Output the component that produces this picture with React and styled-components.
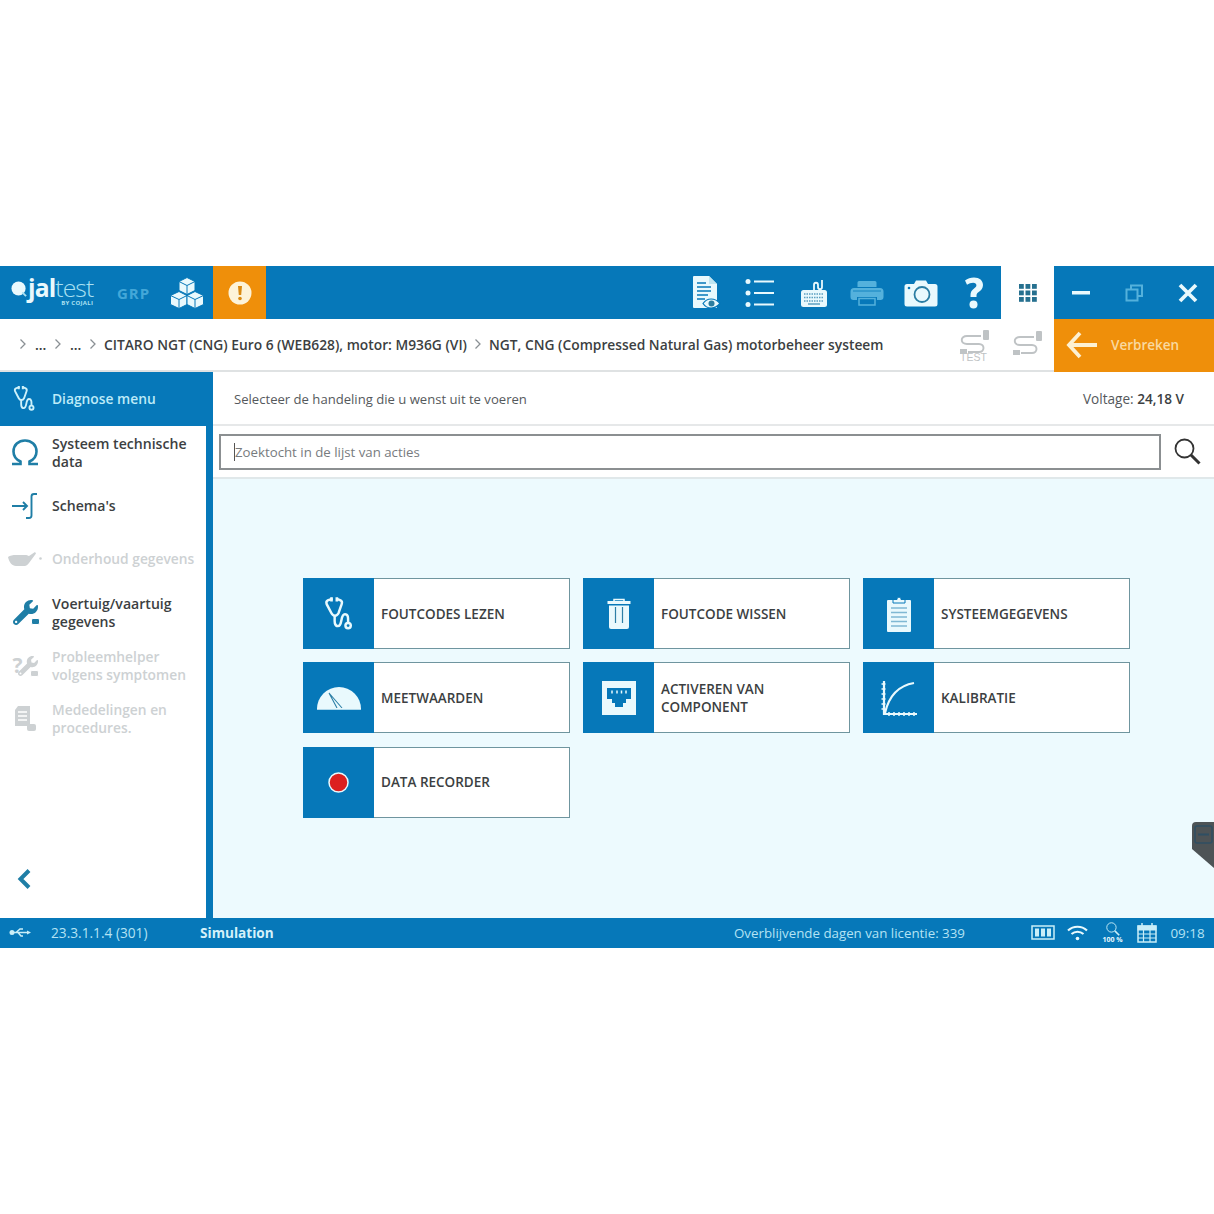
import React from "react";
import styled, { createGlobalStyle } from "styled-components";
import { FaWrench } from "react-icons/fa";

const BLUE = "#0678b9";
const ICE = "#e9f9fd";
const TEAL = "#1f7ea6";
const INK = "#3c3f42";
const MUTED = "#cdd1d3";

const Global = createGlobalStyle`
  html, body { margin: 0; padding: 0; background: #fff; }
  body { font-family: "Open Sans", "Liberation Sans", sans-serif; color: ${INK}; }
  * { box-sizing: border-box; }
`;

const Page = styled.div`
  width: 1214px;
  height: 1214px;
  padding-top: 266px;
  position: relative;
  overflow: hidden;
`;
const TopBar = styled.header`
  display: flex;
  height: 53px;
  background: ${BLUE};
`;
const Brand = styled.div`
  width: 213px;
  display: flex;
  align-items: center;
  flex: none;
`;
const Logo = styled.div`
  width: 117px;
  padding: 0 0 2px 11px;
  display: flex;
  align-items: flex-start;
  gap: 1px;
  flex: none;
`;
const LogoMark = styled.svg`
  margin-top: 5px;
  flex: none;
`;
const LogoWords = styled.div`
  display: flex;
  flex-direction: column;
  align-items: flex-end;
  color: ${ICE};
`;
const LogoName = styled.div`
  font-size: 24.7px;
  font-weight: 300;
  letter-spacing: -0.9px;
  line-height: 24px;
  color: #a9e0f2;
  b { font-weight: 700; color: ${ICE}; }
`;
const LogoBy = styled.div`
  font-size: 6px;
  font-weight: 700;
  line-height: 7px;
  letter-spacing: 0.3px;
  color: #a9e0f2;
`;
const Grp = styled.span`
  font-size: 15px;
  font-weight: 700;
  letter-spacing: 1px;
  color: #43a7d8;
  width: 53px;
  flex: none;
`;
const AlertTab = styled.div`
  width: 53px;
  flex: none;
  background: #ef8f0a;
  display: flex;
  align-items: center;
  justify-content: center;
`;
const ToolGroup = styled.div`
  margin-left: auto;
  display: flex;
`;
const ToolBtn = styled.div`
  width: 53.5px;
  display: flex;
  align-items: center;
  justify-content: center;
`;
const AppsTab = styled.div`
  width: 53px;
  flex: none;
  background: #fff;
  display: flex;
  align-items: center;
  justify-content: center;
`;
const WinGroup = styled.div`
  width: 160px;
  flex: none;
  display: grid;
  grid-template-columns: 53px 54px 53px;
  align-items: center;
  justify-items: center;
`;
const CrumbBar = styled.nav`
  display: flex;
  height: 53px;
  align-items: stretch;
  border-bottom: 2px solid #dfe2e3;
`;
const Crumbs = styled.div`
  flex: 1;
  display: flex;
  align-items: center;
  padding: 0 0 1px 18px;
  font-size: 13.8px;
  font-weight: 600;
  color: ${INK};
  white-space: nowrap;
`;
const Dots = styled.span`
  width: 10px;
  margin: 0 8px 0 7px;
  text-align: center;
`;
const CrumbText = styled.span`
  margin: 0 6px 0 6px;
`;
const Cable = styled.div`
  width: 54px;
  display: flex;
  align-items: center;
  justify-content: center;
  padding-left: ${(p) => p.$shift || 0}px;
  flex: none;
`;
const Disconnect = styled.div`
  width: 160px;
  margin-bottom: -2px;
  padding: 0 0 2px 12px;
  flex: none;
  background: #ef8f0a;
  display: flex;
  align-items: center;
  gap: 14px;
  font-size: 13.5px;
  font-weight: 600;
  color: #f9d9a0;
`;
const Body = styled.div`
  display: flex;
  height: 546px;
`;
const Sidebar = styled.aside`
  width: 213px;
  flex: none;
  display: flex;
  flex-direction: column;
`;
const SideHead = styled.div`
  height: 54px;
  background: ${BLUE};
  display: flex;
  align-items: center;
  gap: 16px;
  padding: 0 0 1px 13px;
  font-size: 13.8px;
  font-weight: 600;
  color: #bdebf8;
`;
const SideList = styled.div`
  flex: 1;
  background: #fff;
  border-right: 7px solid ${BLUE};
  display: flex;
  flex-direction: column;
`;
const SideItem = styled.div`
  height: 53.3px;
  display: flex;
  align-items: center;
  font-size: ${(p) => (p.$off ? 13.8 : 14.1)}px;
  font-weight: 600;
  line-height: 18px;
  color: ${(p) => (p.$off ? MUTED : INK)};
`;
const SideIcon = styled.div`
  width: 52px;
  flex: none;
  display: flex;
  justify-content: center;
  padding-right: 2px;
`;
const BadgeWrap = styled.div`
  position: relative;
  display: flex;
  align-items: center;
  line-height: 0;
`;
const Chip = styled.span`
  position: absolute;
  right: ${(p) => p.$r}px;
  bottom: ${(p) => p.$b}px;
  width: 9px;
  height: 7px;
  border-radius: 2px;
  background: ${(p) => p.$c};
  border: 1px solid #fff;
`;
const HelperMark = styled.span`
  font-size: 21px;
  font-weight: 700;
  line-height: 21px;
  margin-right: -5px;
  color: ${MUTED};
`;
const Collapse = styled.div`
  margin-top: auto;
  padding: 0 0 28px 16px;
  line-height: 0;
`;
const Main = styled.main`
  flex: 1;
  display: flex;
  flex-direction: column;
  min-width: 0;
`;
const InfoRow = styled.div`
  height: 54px;
  display: flex;
  align-items: center;
  justify-content: space-between;
  padding: 0 30px 0 21px;
  color: #55595c;
  border-bottom: 2px solid #e6e8e9;
  b { font-weight: 600; color: ${INK}; }
`;
const Prompt = styled.span`
  font-size: 13.1px;
  padding-top: 1px;
`;
const Voltage = styled.span`
  font-size: 13.6px;
`;
const SearchRow = styled.div`
  height: 53px;
  display: flex;
  align-items: center;
  padding-left: 6px;
  gap: 13px;
  border-bottom: 2px solid #e0e8ea;
`;
const SearchField = styled.div`
  position: relative;
  width: 942px;
  height: 36px;
  &::before {
    content: "";
    position: absolute;
    left: 15px;
    top: 9px;
    width: 1px;
    height: 18px;
    background: #555;
  }
`;
const SearchInput = styled.input`
  width: 100%;
  height: 100%;
  border: 2px solid #8b8f91;
  padding: 0 0 0 14px;
  background: #fff;
  font: 400 13.25px "Open Sans", sans-serif;
  color: ${INK};
  outline: none;
  &::placeholder { color: #777b7e; opacity: 1; }
`;
const Content = styled.div`
  flex: 1;
  background: #edfafe;
  padding: 99px 0 0 90px;
`;
const Grid = styled.div`
  display: grid;
  grid-template-columns: repeat(3, 267px);
  grid-auto-rows: 71px;
  column-gap: 13px;
  row-gap: 13.4px;
`;
const Card = styled.div`
  display: flex;
  align-items: center;
  background: #fff;
  border: 1px solid #6f959f;
  font-size: 13.5px;
  font-weight: 600;
  line-height: 18px;
  color: ${INK};
`;
const CardIcon = styled.div`
  width: 71px;
  align-self: stretch;
  margin: -1px 7px -1px -1px;
  background: ${BLUE};
  display: flex;
  align-items: center;
  justify-content: center;
  flex: none;
`;
const StatusBar = styled.footer`
  height: 30px;
  padding-bottom: 1px;
  background: ${BLUE};
  display: flex;
  align-items: center;
  font-size: 13.4px;
  color: #b4e3f4;
  white-space: nowrap;
`;
const UsbSlot = styled.div`
  width: 51px;
  padding-left: 9px;
  line-height: 0;
  flex: none;
`;
const Version = styled.span`
  width: 149px;
  flex: none;
  font-size: 13.7px;
`;
const Mode = styled.span`
  width: 534px;
  flex: none;
  font-size: 13.6px;
  font-weight: 700;
  color: #d4f1fa;
`;
const License = styled.span`
  width: 291px;
  flex: none;
  font-size: 13.3px;
`;
const StatusIcon = styled.div`
  width: ${(p) => p.$w}px;
  flex: none;
  display: flex;
  flex-direction: column;
  align-items: center;
  line-height: 0;
`;
const ZoomLabel = styled.span`
  font-size: 7px;
  font-weight: 700;
  line-height: 8px;
  color: ${ICE};
`;
const Clock = styled.span`
  width: 47px;
  flex: none;
  text-align: center;
`;
const RemoteTab = styled.div`
  position: absolute;
  right: 0;
  top: 822px;
  line-height: 0;
`;

const Chevron = () => (
  <svg width="10" height="12" viewBox="0 0 10 12" fill="none" stroke="#8a9094" strokeWidth="1.3"><path d="M2.5 1.5 7 6l-4.5 4.5" /></svg>
);
const Stethoscope = ({ s = 30, c = ICE }) => (
  <svg width={s} height={s * 1.15} viewBox="0 0 28 32" fill="none" stroke={c} strokeWidth="2.300">
    <path d="M8 2.500 3.500 4c-1 .5-1.500 2-1 3.500L7 16c1.500 3 5 3 6.500 0l3-8.500c.5-1.500 0-3-1-3.500L12 2.500" />
    <path d="M7 1v4M12 1v4" strokeWidth="2.500" />
    <path d="M10 18c0 4-1 10 3 10 4.500 0 2-11 6.500-11 3.500 0 3 4 3 8" />
    <circle cx="22.500" cy="27.500" r="2.500" />
  </svg>
);
const Cubes = () => (
  <svg width="34" height="32" viewBox="0 0 34 32" fill={ICE} stroke={BLUE} strokeWidth="1">
    <path d="M17 .5l8 4v9l-8 4-8-4v-9z" /><path d="M9 4.500l8 4 8-4M17 8.500v9" fill="none" />
    <path d="M9 14.500l8 4v9l-8 4-8.500-4v-9z" /><path d="M.5 18.500l8.500 4 8-4M9 22.500v9" fill="none" />
    <path d="M25 14.500l8.500 4v9l-8.500 4-8-4v-9z" /><path d="M17 18.500l8 4 8.500-4M25 22.500v9" fill="none" />
  </svg>
);
const Alert = () => (
  <svg width="24" height="24" viewBox="0 0 24 24"><circle cx="12" cy="12" r="11.500" fill="#fdf3d8" /><path d="M10 5h4l-.8 9h-2.400z" fill="#d98a12" /><circle cx="12" cy="17.500" r="1.800" fill="#d98a12" /></svg>
);
const DocEye = () => (
  <svg width="30" height="36" viewBox="0 0 30 36">
    <path d="M2 1h15l8 8v24H2a1 1 0 0 1-1-1V2a1 1 0 0 1 1-1z" fill={ICE} />
    <path d="M17 1v8h8" fill="#bfe6f2" />
    <path d="M5 8h9M5 12h14M5 16h14M5 20h11M5 24h8" stroke={BLUE} strokeWidth="1.400" />
    <path d="M11 28.500c4-6 12-6 17 0-5 6-13 6-17 0z" fill={ICE} stroke={BLUE} strokeWidth="1.200" />
    <circle cx="19.500" cy="28.500" r="3" fill="#2c7d9f" />
  </svg>
);
const ListIcon = () => (
  <svg width="30" height="30" viewBox="0 0 30 30" fill={ICE}>
    <circle cx="3" cy="3.500" r="2.500" /><circle cx="3" cy="15" r="2.500" /><circle cx="3" cy="26.500" r="2.500" />
    <path d="M9 2.500h20v2H9zM9 14h20v2H9zM9 25.500h20v2H9z" />
  </svg>
);
const Keyboard = () => (
  <svg width="28" height="30" viewBox="0 0 28 30">
    <path d="M14 12V7c0-3 4-3 4 0v2c0 3 4 3 4 0V2" fill="none" stroke={ICE} strokeWidth="1.800" />
    <rect x="1" y="12" width="26" height="17" rx="2.500" fill={ICE} />
    <path d="M4 16h20M4 19.500h20M4 23h20" stroke="#5b9fc0" strokeWidth="1.600" strokeDasharray="1.500 1" />
    <path d="M8 26h12" stroke="#5b9fc0" strokeWidth="1.500" />
  </svg>
);
const Printer = () => (
  <svg width="34" height="26" viewBox="0 0 34 26" fill="#54b1dc">
    <path d="M9 1h16a1.500 1.500 0 0 1 1.500 1.500V7h-19V2.500A1.500 1.500 0 0 1 9 1z" />
    <path d="M4 8h26a3.500 3.500 0 0 1 3.500 3.500V17a3 3 0 0 1-3 3H27v-3H7v3H3.500a3 3 0 0 1-3-3v-5.500A3.500 3.500 0 0 1 4 8z" />
    <path d="M3 11h28" stroke={BLUE} strokeWidth=".8" />
    <path d="M9 18.500h16v6.500H9z" fill="none" stroke="#54b1dc" strokeWidth="1.500" />
  </svg>
);
const Camera = () => (
  <svg width="34" height="28" viewBox="0 0 34 28">
    <path d="M3 5h7l2-3.500h10L24 5h7a2.500 2.500 0 0 1 2.500 2.500V25a2.500 2.500 0 0 1-2.500 2.500H3A2.500 2.500 0 0 1 .5 25V7.500A2.500 2.500 0 0 1 3 5z" fill={ICE} />
    <circle cx="18" cy="15.500" r="7.500" fill="none" stroke="#2a7da3" strokeWidth="1.800" />
    <circle cx="5" cy="9" r="1.300" fill={BLUE} />
  </svg>
);
const Question = () => (
  <svg width="20" height="32" viewBox="0 0 20 32" fill={ICE}>
    <path d="M1 3.500C3.500 1.500 6.500.5 10 .5c5.500 0 9 3 9 7.500 0 3.500-2 5.300-4.300 7-1.500 1.100-2.200 2-2.200 3.500v1.500H6.500v-2c0-3 1.300-4.700 3.300-6.200 1.700-1.300 2.600-2.200 2.600-3.500 0-1.600-1.200-2.500-3.200-2.500-2.200 0-4.300.7-6.200 2z" />
    <circle cx="9.500" cy="27.500" r="4" />
  </svg>
);
const Apps = () => (
  <svg width="18" height="18" viewBox="0 0 18 18" fill="#26708f">
    {[0, 6.5, 13].flatMap((y) => [0, 6.5, 13].map((x) => <rect key={`${x}-${y}`} x={x} y={y} width="4.800" height="4.800" />))}
  </svg>
);
const Minus = () => <svg width="18" height="4" viewBox="0 0 18 4"><rect width="18" height="3.500" fill={ICE} /></svg>;
const Restore = () => (
  <svg width="18" height="18" viewBox="0 0 18 18" fill="none" stroke="#54b1dc" strokeWidth="2"><path d="M6 5V1.500h11V12h-4" /><rect x="1.500" y="5.500" width="11" height="11" /></svg>
);
const Close = () => (
  <svg width="20" height="20" viewBox="0 0 20 20" stroke={ICE} strokeWidth="3.800"><path d="M2 2l16 16M18 2 2 18" /></svg>
);
const CableIcon = ({ test, w = 32 }) => (
  <svg width={w} height={test ? 36 : 30} viewBox={test ? "0 -2 32 36" : "0 0 32 30"} fill="none" stroke="#bfc3c5" strokeWidth="1.900">
    <path d="M22 7H8c-7 0-7 8 0 8h12c6 0 6 8 0 8H9" />
    <rect x="24" y="1" width="6" height="10" rx="1" fill="#bfc3c5" stroke="none" />
    <rect x="1" y="20" width="7" height="5" fill="#bfc3c5" stroke="none" />
    {test && <text x="1" y="32" fontSize="10.500" fill="#bfc3c5" stroke="none" fontFamily="Liberation Sans, sans-serif">TEST</text>}
  </svg>
);
const BackArrow = () => (
  <svg width="31" height="28" viewBox="0 0 31 28" fill="none" stroke="#fdf1d3" strokeWidth="3.800"><path d="M14 2 3 14l11 12M3 14h28" /></svg>
);
const Omega = () => (
  <svg width="28" height="27" viewBox="0 0 28 27" fill="none" stroke={TEAL} strokeWidth="2.600">
    <path d="M1 25h8.500v-2.500C5 20.500 2.500 17 2.500 12.500 2.500 6 7.500 1.500 14 1.500S25.500 6 25.500 12.500c0 4.500-2.500 8-7 10V25H27" />
  </svg>
);
const Schema = () => (
  <svg width="26" height="26" viewBox="0 0 26 26" fill="none" stroke={TEAL} strokeWidth="1.900">
    <path d="M0 13h15M11 9l4 4-4 4" />
    <path d="M25 1h-3c-1.500 0-2.500 1-2.500 2.500v19c0 1.500-1 2.500-2.500 2.500h-3" />
  </svg>
);
const OilCan = () => (
  <svg width="36" height="16" viewBox="0 0 36 16" fill={MUTED}>
    <path d="M1 6c2-1.500 5-2 8-2h9c1.500 0 3 .5 4 1l6-4 1 1.500L22 12c-1 1.500-2.500 3-4.500 3H9C5 15 2 11 1 6z" />
    <circle cx="33.500" cy="7.500" r="1.300" />
  </svg>
);
const WrenchIcon = () => (
  <BadgeWrap>
    <FaWrench size={25} color={TEAL} />
    <Chip $r={-2} $b={0} $c={TEAL} />
  </BadgeWrap>
);
const HelperIcon = () => (
  <BadgeWrap>
    <HelperMark>?</HelperMark>
    <FaWrench size={20} color={MUTED} />
    <Chip $r={-1} $b={-1} $c={MUTED} />
  </BadgeWrap>
);
const NoticeIcon = () => (
  <svg width="24" height="28" viewBox="0 0 24 28" fill={MUTED}>
    <path d="M5 1h12v20H2V5z" />
    <path d="M5 7h9M5 11h9M5 15h9" stroke="#fff" strokeWidth="1.300" />
    <rect x="14" y="19" width="9" height="7" rx="2" />
  </svg>
);
const Chev = () => (
  <svg width="18" height="22" viewBox="0 0 18 22" fill="none" stroke={TEAL} strokeWidth="4"><path d="M13 2.500 4.500 11l8.500 8.500" /></svg>
);
const Magnifier = ({ s = 27, c = "#333", w = 1.8 }) => (
  <svg width={s} height={s} viewBox="0 0 27 27" fill="none" stroke={c} strokeWidth={w}>
    <circle cx="10.500" cy="10.500" r="9" /><path d="M17 17l8.500 8.500" strokeWidth={w * 1.7} />
  </svg>
);
const Trash = () => (
  <svg width="24" height="32" viewBox="0 0 24 32">
    <path d="M7 3V1.500h10V3" fill="none" stroke={ICE} strokeWidth="1.500" />
    <rect x="0.500" y="3" width="23" height="3" fill={ICE} />
    <path d="M2 7.500h20V29a2 2 0 0 1-2 2H4a2 2 0 0 1-2-2z" fill={ICE} />
    <path d="M8.500 9v16M15.500 9v16" stroke="#2d7fa6" strokeWidth="1.200" />
  </svg>
);
const Clipboard = () => (
  <svg width="26" height="36" viewBox="0 0 26 36">
    <path d="M2 4h22a1 1 0 0 1 1 1v30a1 1 0 0 1-1 1H2a1 1 0 0 1-1-1V5a1 1 0 0 1 1-1z" fill={ICE} />
    <path d="M7 7V3.500h4C11 .5 15 .5 15 3.500h4V7z" fill={ICE} stroke={BLUE} strokeWidth="1" />
    <path d="M5 12h16M5 16.500h16M5 21h16M5 25.500h16M5 30h16" stroke="#7fb8d3" strokeWidth="1.600" />
  </svg>
);
const Gauge = () => (
  <svg width="44" height="24" viewBox="0 0 44 24">
    <path d="M0 23a22 22 0 0 1 44 0z" fill={ICE} />
    <path d="M12 7l13 15M12 7l8 15" stroke="#2d7fa6" strokeWidth="1.100" fill="none" />
    <path d="M0 23h44" stroke={ICE} strokeWidth="1.500" />
  </svg>
);
const Ethernet = () => (
  <svg width="34" height="34" viewBox="0 0 34 34">
    <rect width="34" height="34" fill={ICE} />
    <path d="M5 7h24v11h-5v4h-3v4H13v-4h-3v-4H5z" fill={BLUE} />
    <path d="M10 9.500v3M15 9.500v3M19.500 9.500v3M24 9.500v3" stroke={ICE} strokeWidth="1.500" />
  </svg>
);
const Calib = () => (
  <svg width="36" height="36" viewBox="0 0 36 36" fill="none" stroke={ICE}>
    <path d="M3 1v33h33" strokeWidth="2.200" />
    <path d="M.5 4h4M.5 9h4M.5 14h4M.5 19h4M.5 24h4M.5 29h4M8 32v4M13 32v4M18 32v4M23 32v4M28 32v4M33 32v4" strokeWidth="1.500" />
    <path d="M4 33C7 20 15 6 33 3" strokeWidth="2.200" />
  </svg>
);
const RecordDot = () => (
  <svg width="21" height="21" viewBox="0 0 21 21"><circle cx="10.500" cy="10.500" r="9.500" fill="#dc1f1f" stroke={ICE} strokeWidth="1.500" /></svg>
);
const Usb = () => (
  <svg width="22" height="11" viewBox="0 0 22 11" fill="#c9eef8" stroke="#c9eef8">
    <circle cx="3" cy="5.500" r="2.500" stroke="none" />
    <path d="M4 5.500h15M7 5.500l4-3.500h3M9 5.500l3 3.500h2" fill="none" strokeWidth="1.500" />
    <path d="M18 3.500l4 2-4 2z" stroke="none" />
  </svg>
);
const Battery = () => (
  <svg width="24" height="15" viewBox="0 0 24 15" fill="#c9eef8"><path d="M1 1h22v13H1z" fill="none" stroke="#c9eef8" strokeWidth="1.500" /><rect x="4" y="3.500" width="4" height="8" /><rect x="10" y="3.500" width="4" height="8" /><rect x="16" y="3.500" width="4" height="8" /></svg>
);
const Wifi = () => (
  <svg width="21" height="16" viewBox="0 0 21 16" fill="none" stroke={ICE} strokeWidth="2.200"><path d="M1 5.500c5.500-5 13.500-5 19 0M4.500 9c3.500-3 8.500-3 12 0" /><circle cx="10.500" cy="13.500" r="1.800" fill={ICE} stroke="none" /></svg>
);
const Calendar = () => (
  <svg width="20" height="20" viewBox="0 0 20 20" fill="none" stroke="#c9eef8"><rect x="1" y="3" width="18" height="16" strokeWidth="1.500" /><rect x="1" y="3" width="18" height="4" fill="#c9eef8" /><path d="M5 0v4M15 0v4" strokeWidth="1.500" /><path d="M1 11h18M1 15h18M6.500 7v12M13 7v12" strokeWidth="1.200" /></svg>
);
const Remote = () => (
  <svg width="22" height="46" viewBox="0 0 22 46">
    <path d="M22 0H4a4 4 0 0 0-4 4v23l22 19z" fill="#4d5356" />
    <rect x="3" y="4" width="17" height="17" rx="2" fill="none" stroke="#2f4f63" strokeWidth="1.500" />
    <path d="M6 12.500h11" stroke="#2f4f63" strokeWidth="2" />
  </svg>
);

const side = [
  { label: <>Systeem technische<br />data</>, icon: <Omega /> },
  { label: "Schema's", icon: <Schema /> },
  { label: "Onderhoud gegevens", icon: <OilCan />, off: true },
  { label: <>Voertuig/vaartuig<br />gegevens</>, icon: <WrenchIcon /> },
  { label: <>Probleemhelper<br />volgens symptomen</>, icon: <HelperIcon />, off: true },
  { label: <>Mededelingen en<br />procedures.</>, icon: <NoticeIcon />, off: true },
];
const actions = [
  { label: "FOUTCODES LEZEN", icon: <Stethoscope /> },
  { label: "FOUTCODE WISSEN", icon: <Trash /> },
  { label: "SYSTEEMGEGEVENS", icon: <Clipboard /> },
  { label: "MEETWAARDEN", icon: <Gauge /> },
  { label: <>ACTIVEREN VAN<br />COMPONENT</>, icon: <Ethernet /> },
  { label: "KALIBRATIE", icon: <Calib /> },
  { label: "DATA RECORDER", icon: <RecordDot /> },
];

export default function App() {
  return (
    <Page>
      <Global />
      <TopBar>
        <Brand>
          <Logo>
            <LogoMark width="16" height="17" viewBox="0 0 17 18">
              <circle cx="8" cy="8" r="7.500" fill={ICE} /><path d="M12 12l4 4" stroke="#a9e0f2" strokeWidth="2" />
            </LogoMark>
            <LogoWords>
              <LogoName><b>jal</b>test</LogoName>
              <LogoBy>BY COJALI</LogoBy>
            </LogoWords>
          </Logo>
          <Grp>GRP</Grp>
          <Cubes />
        </Brand>
        <AlertTab><Alert /></AlertTab>
        <ToolGroup>
          <ToolBtn><DocEye /></ToolBtn>
          <ToolBtn><ListIcon /></ToolBtn>
          <ToolBtn><Keyboard /></ToolBtn>
          <ToolBtn><Printer /></ToolBtn>
          <ToolBtn><Camera /></ToolBtn>
          <ToolBtn><Question /></ToolBtn>
        </ToolGroup>
        <AppsTab><Apps /></AppsTab>
        <WinGroup><Minus /><Restore /><Close /></WinGroup>
      </TopBar>
      <CrumbBar>
        <Crumbs>
          <Chevron /><Dots>...</Dots><Chevron /><Dots>...</Dots><Chevron />
          <CrumbText>CITARO NGT (CNG) Euro 6 (WEB628), motor: M936G (VI)</CrumbText>
          <Chevron />
          <CrumbText>NGT, CNG (Compressed Natural Gas) motorbeheer systeem</CrumbText>
        </Crumbs>
        <Cable $shift={4}><CableIcon test /></Cable>
        <Cable $shift={2}><CableIcon w={34} /></Cable>
        <Disconnect><BackArrow />Verbreken</Disconnect>
      </CrumbBar>
      <Body>
        <Sidebar>
          <SideHead><Stethoscope s={23} c="#cdf1fa" />Diagnose menu</SideHead>
          <SideList>
            {side.map((it, i) => (
              <SideItem key={i} $off={it.off}>
                <SideIcon>{it.icon}</SideIcon>
                <span>{it.label}</span>
              </SideItem>
            ))}
            <Collapse><Chev /></Collapse>
          </SideList>
        </Sidebar>
        <Main>
          <InfoRow>
            <Prompt>Selecteer de handeling die u wenst uit te voeren</Prompt>
            <Voltage>Voltage: <b>24,18 V</b></Voltage>
          </InfoRow>
          <SearchRow>
            <SearchField><SearchInput placeholder="Zoektocht in de lijst van acties" readOnly /></SearchField>
            <Magnifier />
          </SearchRow>
          <Content>
            <Grid>
              {actions.map((a, i) => (
                <Card key={i}>
                  <CardIcon>{a.icon}</CardIcon>
                  <span>{a.label}</span>
                </Card>
              ))}
            </Grid>
          </Content>
        </Main>
      </Body>
      <StatusBar>
        <UsbSlot><Usb /></UsbSlot>
        <Version>23.3.1.1.4 (301)</Version>
        <Mode>Simulation</Mode>
        <License>Overblijvende dagen van licentie: 339</License>
        <StatusIcon $w={35}><Battery /></StatusIcon>
        <StatusIcon $w={35}><Wifi /></StatusIcon>
        <StatusIcon $w={35}><Magnifier s={14} c="#c9eef8" w={1.8} /><ZoomLabel>100 %</ZoomLabel></StatusIcon>
        <StatusIcon $w={34}><Calendar /></StatusIcon>
        <Clock>09:18</Clock>
      </StatusBar>
      <RemoteTab><Remote /></RemoteTab>
    </Page>
  );
}
